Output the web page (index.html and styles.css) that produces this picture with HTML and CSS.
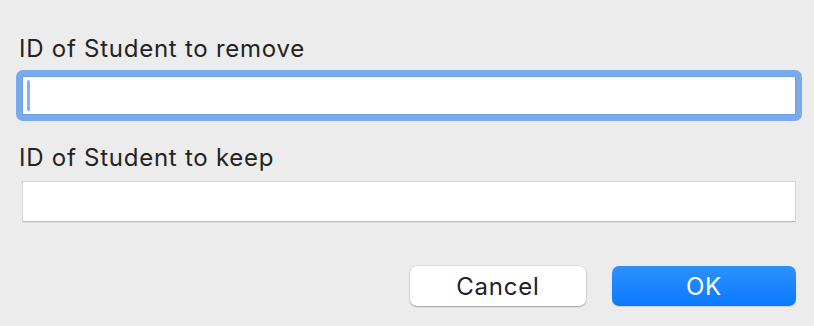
FILE: index.html
```html
<!DOCTYPE html>
<html>
<head>
<meta charset="utf-8">
<link rel="stylesheet" href="styles.css">
</head>
<body>
<div class="dialog">
  <div class="label">ID of Student to remove</div>
  <div class="focus-ring">
    <div class="field field-focused"><span class="caret"></span></div>
  </div>
  <div class="label label-second">ID of Student to keep</div>
  <div class="field field-plain"></div>
  <div class="buttons">
    <div class="btn btn-cancel">Cancel</div>
    <div class="btn btn-ok">OK</div>
  </div>
</div>
</body>
</html>
```

FILE: styles.css
```css
html, body {
  margin: 0;
  padding: 0;
  background: #ececec;
}
body {
  width: 814px;
  height: 326px;
  overflow: hidden;
  font-family: Inter, "Liberation Sans", sans-serif;
}
.dialog {
  display: flex;
  flex-direction: column;
  padding: 35px 18px 0 19px;
}
.label {
  font-size: 24px;
  line-height: 28px;
  letter-spacing: 0.75px;
  color: #232323;
}
.label-second {
  margin-top: 23px;
}
.focus-ring {
  margin: 7px 0 0 -3px;
  margin-right: -6px;
  padding: 6px;
  border-radius: 7px;
  background: #78aaec;
}
.field {
  box-sizing: border-box;
  background: #fff;
}
.field-focused {
  height: 39px;
  display: flex;
  align-items: center;
  padding-left: 5px;
  box-shadow: inset 0 0 0 1px #6c9fe6;
}
.caret {
  width: 3px;
  height: 31px;
  border-radius: 2px;
  background: #7bb6fb;
}
.field-plain {
  margin: 9px 0 0 3px;
  height: 41px;
  border: 1px solid #d6d6d6;
  border-bottom-color: #bebebe;
  box-shadow: 0 1px 0 rgba(0,0,0,0.04);
}
.buttons {
  display: flex;
  justify-content: flex-end;
  gap: 26px;
  margin-top: 44px;
}
.btn {
  height: 40px;
  border-radius: 7px;
  display: flex;
  align-items: center;
  justify-content: center;
  font-size: 24px;
  letter-spacing: 0.8px;
}
.btn-cancel {
  width: 176px;
  background: #fff;
  color: #222;
  box-shadow: 0 0 0 0.5px rgba(0,0,0,0.12), 0 1px 1.5px rgba(0,0,0,0.28);
}
.btn-ok {
  width: 184px;
  color: #fff;
  background: linear-gradient(#2d91fc, #0a79ff);
  box-shadow: 0 1px 1px rgba(0,0,0,0.12);
}
```
